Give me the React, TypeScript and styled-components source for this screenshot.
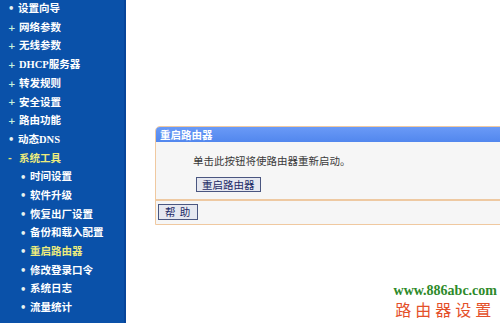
import styled, { createGlobalStyle } from "styled-components";

const GlobalStyle = createGlobalStyle`
    html, body {
        margin: 0;
        padding: 0;
        background: #ffffff;
    }
    body {
        font-family: "Liberation Serif", "Noto Sans CJK SC", serif;
    }
`

type menuT = {
    label: string;
    mark: "plus" | "dot" | "minus";
    sub?: boolean;
    active?: boolean;
    open?: boolean;
}

const menu: menuT[] = [
    { label: "设置向导", mark: "dot" },
    { label: "网络参数", mark: "plus" },
    { label: "无线参数", mark: "plus" },
    { label: "DHCP服务器", mark: "plus" },
    { label: "转发规则", mark: "plus" },
    { label: "安全设置", mark: "plus" },
    { label: "路由功能", mark: "plus" },
    { label: "动态DNS", mark: "dot" },
    { label: "系统工具", mark: "minus", open: true },
    { label: "时间设置", mark: "dot", sub: true },
    { label: "软件升级", mark: "dot", sub: true },
    { label: "恢复出厂设置", mark: "dot", sub: true },
    { label: "备份和载入配置", mark: "dot", sub: true },
    { label: "重启路由器", mark: "dot", sub: true, active: true },
    { label: "修改登录口令", mark: "dot", sub: true },
    { label: "系统日志", mark: "dot", sub: true },
    { label: "流量统计", mark: "dot", sub: true },
]

const markText = { plus: "+", dot: "•", minus: "-" }

export default function App() {
    return (
        <>
            <GlobalStyle />
            <Page>
                <Sidebar>
                    {menu.map((item) => (
                        <MenuRow key={item.label} $sub={item.sub}>
                            <Mark $kind={item.mark}>{markText[item.mark]}</Mark>
                            <MenuLabel $hi={item.active || item.open}>{item.label}</MenuLabel>
                        </MenuRow>
                    ))}
                </Sidebar>
                <Main>
                    <Panel>
                        <PanelHead>重启路由器</PanelHead>
                        <PanelBody>
                            <Hint>单击此按钮将使路由器重新启动。</Hint>
                            <FormButton>重启路由器</FormButton>
                        </PanelBody>
                        <PanelFoot>
                            <HelpButton>帮 助</HelpButton>
                        </PanelFoot>
                    </Panel>
                    <Watermark>
                        <SiteUrl>www.886abc.com</SiteUrl>
                        <SiteName>路由器设置</SiteName>
                    </Watermark>
                </Main>
            </Page>
        </>
    )
}

const Page = styled.div`
    display: flex;
    width: 500px;
    height: 323px;
    overflow: hidden;
`

const Sidebar = styled.div`
    width: 124px;
    flex-shrink: 0;
    background: #0a51a9;
    border-right: 2px solid #07459a;
    display: flex;
    flex-direction: column;
`

const MenuRow = styled.div<{ $sub?: boolean }>`
    display: flex;
    align-items: center;
    height: 18.7px;
    padding-left: ${(p) => (p.$sub ? "20px" : "8px")};
    white-space: nowrap;
`

const Mark = styled.span<{ $kind: string }>`
    width: ${(p) => (p.$kind === "dot" ? "10px" : "11px")};
    font-size: ${(p) => (p.$kind === "dot" ? "10px" : "9px")};
    font-weight: bold;
    font-family: "DejaVu Sans", sans-serif;
    color: ${(p) => (p.$kind === "plus" ? "#c6f2dc" : p.$kind === "minus" ? "#e6e47a" : "#e8f4f0")};
    line-height: 1;
`

const MenuLabel = styled.span<{ $hi?: boolean }>`
    font-size: 10.5px;
    font-weight: bold;
    color: ${(p) => (p.$hi ? "#eceb7c" : "#ffffff")};
    line-height: 1;
`

const Main = styled.div`
    position: relative;
    flex: 1;
    padding: 126px 0 0 29px;
    overflow: hidden;
`

const Panel = styled.div`
    width: 420px;
    border: 1px solid #f0c9a0;
    border-radius: 5px 5px 0 0;
    background: #f6f6f6;
    overflow: hidden;
`

const PanelHead = styled.div`
    height: 15px;
    background: linear-gradient(#6a9af6, #5287ee);
    color: #ffffff;
    font-size: 10.5px;
    font-weight: bold;
    line-height: 15px;
    padding-left: 4px;
    font-family: "Noto Sans CJK SC", sans-serif;
`

const PanelBody = styled.div`
    display: flex;
    flex-direction: column;
    align-items: flex-start;
    padding: 12px 0 7px 37px;
    gap: 9px;
    border-bottom: 2px solid #eec9a2;
`

const Hint = styled.div`
    font-family: "Noto Sans CJK SC", sans-serif;
    font-size: 10.5px;
    line-height: 14px;
    color: #3a3a3a;
`

const FormButton = styled.button`
    font-family: "Noto Sans CJK SC", sans-serif;
    font-size: 10.5px;
    line-height: 12px;
    height: 15px;
    padding: 0 5px;
    margin-left: 3px;
    color: #1c2a66;
    background: #e6e8f0;
    border: 1px solid #4a5680;
    border-radius: 0;
`

const PanelFoot = styled.div`
    padding: 3px 0 4px 2px;
    display: flex;
`

const HelpButton = styled(FormButton)`
    margin-left: 0;
    height: 16px;
    padding: 0 6px;
    letter-spacing: 1px;
`

const Watermark = styled.div`
    position: absolute;
    right: 3px;
    bottom: 4px;
    display: flex;
    flex-direction: column;
    align-items: center;
`

const SiteUrl = styled.div`
    font-family: "Liberation Serif", serif;
    font-weight: bold;
    font-size: 14px;
    line-height: 17px;
    color: #2e8a2a;
`

const SiteName = styled.div`
    font-family: "Noto Sans CJK SC", serif;
    font-size: 16px;
    line-height: 20px;
    letter-spacing: 4px;
    color: #e4502a;
`
